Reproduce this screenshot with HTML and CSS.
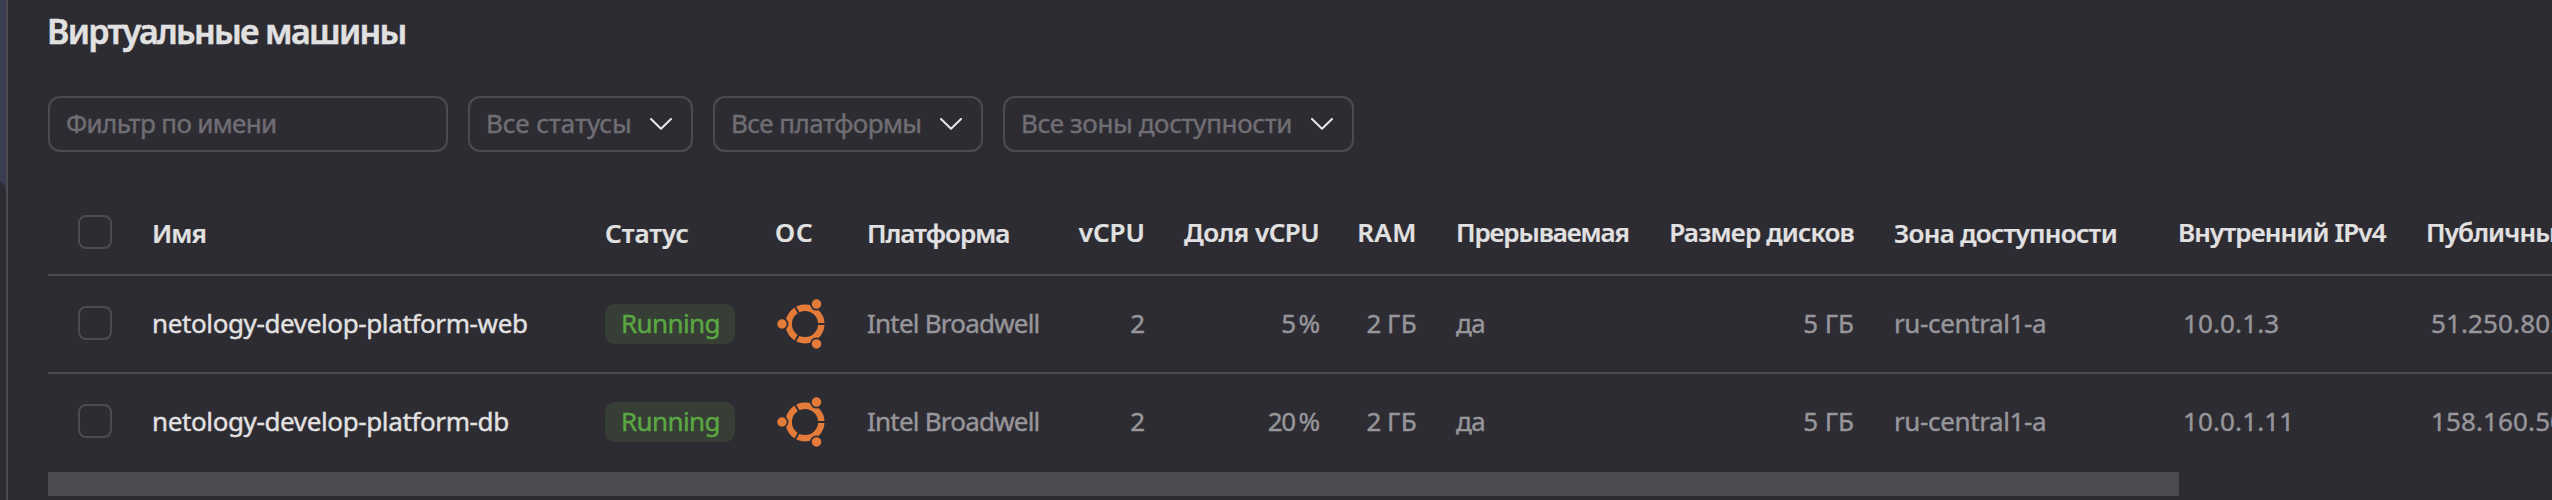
FILE: index.html
```html
<!DOCTYPE html>
<html lang="ru">
<head>
<meta charset="utf-8">
<title>Виртуальные машины</title>
<link rel="stylesheet" href="styles.css">
</head>
<body>
<svg class="defs" aria-hidden="true">
  <symbol id="chevron" viewBox="0 0 22 12"><path d="M1 1 11 10.8 21 1" fill="none" stroke="currentColor" stroke-width="2" stroke-linecap="round" stroke-linejoin="round"/></symbol>
  <symbol id="ubuntu" viewBox="-28 -25 56 50">
    <circle r="16.3" fill="none" stroke="#e57b38" stroke-width="6.4"/>
    <g stroke="#2e2c33" stroke-width="2">
      <path d="M12 0H21M-6 -10.4-10.5 -18.2M-6 10.4-10.5 18.2"/>
    </g>
    <g fill="#e57b38" stroke="#2e2c33" stroke-width="1.7">
      <circle cx="-23" cy="0" r="5.6"/><circle cx="11.5" cy="-19.9" r="5.6"/><circle cx="11.5" cy="19.9" r="5.6"/>
    </g>
  </symbol>
</svg>
<div class="app">
  <aside class="side"><div class="side-active"></div></aside>
  <main class="main">
    <h1 class="title">Виртуальные машины</h1>
    <div class="filters">
      <div class="field field-name"><span class="label t-filter">Фильтр по имени</span></div>
      <div class="field field-status"><span class="label t-status">Все статусы</span><svg class="chev"><use href="#chevron"/></svg></div>
      <div class="field field-platform"><span class="label t-platforms">Все платформы</span><svg class="chev"><use href="#chevron"/></svg></div>
      <div class="field field-zone"><span class="label t-zones">Все зоны доступности</span><svg class="chev"><use href="#chevron"/></svg></div>
    </div>
    <div class="table">
      <div class="row head">
        <div class="cell check"><i class="box"></i></div>
        <div class="cell low h-name">Имя</div>
        <div class="cell low">Статус</div>
        <div class="cell h-os">ОС</div>
        <div class="cell low h-platform">Платформа</div>
        <div class="cell num">vCPU</div>
        <div class="cell num h-share">Доля vCPU</div>
        <div class="cell num h-ram">RAM</div>
        <div class="cell pre h-pre">Прерываемая</div>
        <div class="cell num h-disk">Размер дисков</div>
        <div class="cell zone low h-zone">Зона доступности</div>
        <div class="cell h-ip">Внутренний IPv4</div>
        <div class="cell h-ip">Публичный IPv4</div>
      </div>
      <div class="row">
        <div class="cell check"><i class="box"></i></div>
        <div class="cell name">netology-develop-platform-web</div>
        <div class="cell mid"><span class="badge">Running</span></div>
        <div class="cell mid"><svg class="os"><use href="#ubuntu"/></svg></div>
        <div class="cell platform">Intel Broadwell</div>
        <div class="cell num">2</div>
        <div class="cell num share">5 %</div>
        <div class="cell num ram">2 ГБ</div>
        <div class="cell pre yes">да</div>
        <div class="cell num">5 ГБ</div>
        <div class="cell zone zone-id">ru-central1-a</div>
        <div class="cell ip">10.0.1.3</div>
        <div class="cell ip">51.250.80.</div>
      </div>
      <div class="row">
        <div class="cell check"><i class="box"></i></div>
        <div class="cell name">netology-develop-platform-db</div>
        <div class="cell mid"><span class="badge">Running</span></div>
        <div class="cell mid"><svg class="os"><use href="#ubuntu"/></svg></div>
        <div class="cell platform">Intel Broadwell</div>
        <div class="cell num">2</div>
        <div class="cell num share">20 %</div>
        <div class="cell num ram">2 ГБ</div>
        <div class="cell pre yes">да</div>
        <div class="cell num">5 ГБ</div>
        <div class="cell zone zone-id">ru-central1-a</div>
        <div class="cell ip">10.0.1.11</div>
        <div class="cell ip">158.160.50</div>
      </div>
      <div class="scroll"></div>
    </div>
  </main>
</div>
</body>
</html>
```
FILE: styles.css
```css
* { box-sizing: border-box; }
body {
  margin: 0;
  height: 500px;
  overflow: hidden;
  background: #2e2c33;
  color: #e2e1e1;
  font: 400 26px/36px "Noto Sans", sans-serif;
}
.defs { display: none; }
.app { display: flex; height: 500px; }
.side { width: 8px; flex: none; border-right: 2px solid #4d4b51; }
.side-active {
  height: 186px;
  background: #3a3d52;
  clip-path: polygon(0 0, 100% 0, 100% 100%, 0 182px);
}
.main { flex: 1; min-width: 0; padding: 7px 0 0 40px; overflow: hidden; }
.title {
  margin: 0 0 41px -1px;
  font-size: 34px;
  font-weight: 600;
  line-height: 48px;
  letter-spacing: -1.69px;
  -webkit-text-stroke: .5px;
}
.filters { display: flex; gap: 20px; height: 56px; color: #706e73; }
.field {
  display: flex;
  align-items: center;
  justify-content: space-between;
  flex: none;
  height: 56px;
  padding: 0 19px 0 16px;
  border: 2px solid #4d4b51;
  border-radius: 12px;
  white-space: nowrap;
}
.field-name { width: 400px; }
.field-status { width: 225px; }
.field-platform { width: 270px; }
.field-zone { width: 351px; }
.label { padding-bottom: 2px; -webkit-text-stroke: .4px; }
.t-filter { letter-spacing: -.66px; }
.t-status { letter-spacing: -.1px; }
.t-platforms { letter-spacing: -.55px; }
.t-zones { letter-spacing: -.38px; }
.chev { width: 22px; height: 12px; flex: none; color: #e8e7e8; }
.table { padding-top: 40px; }
.row {
  display: grid;
  grid-template-columns: 104px 453px 170px 92px 190px 88px 174px 98px 215px 222px 324px 248px 240px;
  width: 2618px;
  height: 98px;
  border-bottom: 2px solid #4d4b51;
  color: #97969a;
}
.row:nth-child(3) { border-bottom-color: transparent; }
.cell { display: flex; align-items: center; padding-bottom: 2px; white-space: pre; -webkit-text-stroke: .4px; }
.head { height: 84px; color: #e2e1e1; font-weight: 600; }
.head .cell { padding-bottom: 2px; -webkit-text-stroke: .2px; }
.head .low { padding-bottom: 0; }
.row .mid { padding-bottom: 0; }
.check { padding-left: 30px; }
.head .check { padding-bottom: 3px; }
.box { width: 34px; height: 34px; border: 2px solid #4d4b51; border-radius: 8px; }
.num { justify-content: flex-end; }
.pre { padding-left: 39px; }
.zone { padding-left: 40px; }
.h-name { letter-spacing: -.9px; }
.h-os { letter-spacing: 1px; }
.h-platform { letter-spacing: -1px; }
.h-share { letter-spacing: -.55px; }
.h-ram { letter-spacing: .5px; }
.h-pre { letter-spacing: -1.1px; }
.h-disk { letter-spacing: -.78px; }
.h-zone { letter-spacing: -.7px; }
.h-ip { letter-spacing: -.86px; }
.name { color: #e2e1e1; letter-spacing: -.38px; }
.badge {
  width: 130px;
  height: 40px;
  padding-left: 16px;
  border-radius: 10px;
  background: #363e36;
  color: #5ba843;
  line-height: 38px;
  letter-spacing: -.62px;
}
.os { width: 56px; height: 50px; margin-left: 1.5px; }
.platform { letter-spacing: -.79px; }
.share { word-spacing: -2px; letter-spacing: -1.2px; }
.ram { word-spacing: -2px; letter-spacing: .4px; }
.yes { letter-spacing: -.5px; }
.zone-id { letter-spacing: -.37px; }
.ip { padding-left: 5px; letter-spacing: .12px; }
.scroll { width: 2131px; height: 24px; background: #4d4b50; }
```
